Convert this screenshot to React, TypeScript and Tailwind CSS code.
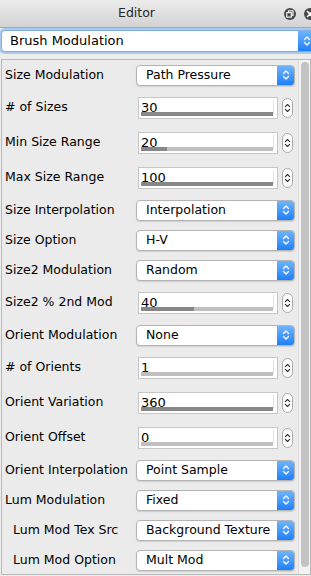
import React from "react";

const font = { fontFamily: '"DejaVu Sans", "Liberation Sans", sans-serif' };

function Chevrons({ color = "white", w = 8, h = 12 }: { color?: string; w?: number; h?: number }) {
  return (
    <svg width={w} height={h} viewBox="0 0 8 12" fill="none">
      <path d="M1.5 4.5 L4 2 L6.5 4.5" stroke={color} strokeWidth="1.3" strokeLinecap="round" strokeLinejoin="round" />
      <path d="M1.5 7.5 L4 10 L6.5 7.5" stroke={color} strokeWidth="1.3" strokeLinecap="round" strokeLinejoin="round" />
    </svg>
  );
}

function Select({ value }: { value: string }) {
  return (
    <div className="flex h-[21px] w-[159px] items-stretch overflow-hidden rounded-[4px] border border-[#b4b4b4] bg-white shadow-[0_1px_1px_rgba(0,0,0,0.12)]">
      <div className="flex flex-1 items-center pl-[9px] text-[12.5px] text-black whitespace-nowrap overflow-hidden">{value}</div>
      <div className="flex w-[17px] items-center justify-center bg-gradient-to-b from-[#6db4fb] to-[#1b7ff9]">
        <Chevrons />
      </div>
    </div>
  );
}

function Spin({ value, pct }: { value: string; pct: number }) {
  return (
    <div className="flex items-center">
      <div className="relative ml-[2px] h-[22px] w-[140px] border border-[#c6c6c6] bg-white">
        <div className="absolute left-[2px] top-[2px] text-[13px] leading-[16px] text-black">{value}</div>
        <div className="absolute right-[3px] top-[2px] h-[14px] w-px bg-[#e2e2e2]" />
        <div className="absolute bottom-[2px] left-[2px] right-[4px] h-[4px] bg-[#c0c0c0]">
          <div className="h-full bg-[#878787]" style={{ width: `${pct}%` }} />
        </div>
      </div>
      <div className="ml-[4px] flex h-[20px] w-[11px] items-center justify-center rounded-full border border-[#a8a8a8] bg-white">
        <Chevrons color="#333" w={7} h={12} />
      </div>
    </div>
  );
}

type Row =
  | { label: string; kind: "sel"; value: string; indent?: boolean }
  | { label: string; kind: "spin"; value: string; pct: number; indent?: boolean };

const rows: Row[] = [
  { label: "Size Modulation", kind: "sel", value: "Path Pressure" },
  { label: "# of Sizes", kind: "spin", value: "30", pct: 100 },
  { label: "Min Size Range", kind: "spin", value: "20", pct: 20 },
  { label: "Max Size Range", kind: "spin", value: "100", pct: 100 },
  { label: "Size Interpolation", kind: "sel", value: "Interpolation" },
  { label: "Size Option", kind: "sel", value: "H-V" },
  { label: "Size2 Modulation", kind: "sel", value: "Random" },
  { label: "Size2 % 2nd Mod", kind: "spin", value: "40", pct: 40 },
  { label: "Orient Modulation", kind: "sel", value: "None" },
  { label: "# of Orients", kind: "spin", value: "1", pct: 0 },
  { label: "Orient Variation", kind: "spin", value: "360", pct: 100 },
  { label: "Orient Offset", kind: "spin", value: "0", pct: 0 },
  { label: "Orient Interpolation", kind: "sel", value: "Point Sample" },
  { label: "Lum Modulation", kind: "sel", value: "Fixed" },
  { label: "Lum Mod Tex Src", kind: "sel", value: "Background Texture", indent: true },
  { label: "Lum Mod Option", kind: "sel", value: "Mult Mod", indent: true },
];

export default function App() {
  return (
    <div className="h-[576px] w-[311px] overflow-hidden bg-[#ececec] text-black" style={font}>
      {/* Title bar */}
      <div className="relative flex h-[28px] items-center justify-center border-b border-[#a9a9a9] bg-gradient-to-b from-[#ececec] to-[#d3d3d3]">
        <span className="mr-[38px] text-[12.5px] text-[#262626]">Editor</span>
        <div className="absolute right-[-5px] top-[8px] flex gap-[8px]">
          <div className="flex h-[12px] w-[12px] items-center justify-center rounded-full bg-[#4a4a4a]">
            <svg width="8" height="8" viewBox="0 0 8 8" fill="none">
              <rect x="2.5" y="0.8" width="4.5" height="4.5" stroke="white" strokeWidth="1.1" />
              <rect x="0.8" y="2.6" width="4.5" height="4.5" fill="#4a4a4a" stroke="white" strokeWidth="1.1" />
            </svg>
          </div>
          <div className="flex h-[12px] w-[12px] items-center justify-center rounded-full bg-[#4a4a4a]">
            <svg width="8" height="8" viewBox="0 0 8 8" fill="none">
              <path d="M1.5 1.5 L6.5 6.5 M6.5 1.5 L1.5 6.5" stroke="white" strokeWidth="1.6" strokeLinecap="round" />
            </svg>
          </div>
        </div>
      </div>

      {/* Main select */}
      <div className="mt-[2px] pl-[1px]">
        <div className="flex h-[22px] w-[316px] items-stretch overflow-hidden rounded-[4px] border border-[#7faee6] bg-white shadow-[0_0_0_2px_#a9c9ef]">
          <div className="flex flex-1 items-center pl-[8px] text-[13px]">Brush Modulation</div>
          <div className="flex w-[18px] items-center justify-center bg-gradient-to-b from-[#6db4fb] to-[#1b7ff9]">
            <Chevrons />
          </div>
        </div>
      </div>

      {/* Panel */}
      <div className="ml-[1px] mt-[7px] flex h-[516px] border border-[#b9b9b9] bg-[#ebebeb]">
        <div className="flex-1 pl-[3px]">
          {rows.map((r) => (
            <div key={r.label} className={`flex items-center ${r.kind === "sel" ? "h-[30px]" : "h-[35px]"}`}>
              <div className={`w-[131px] shrink-0 whitespace-nowrap text-[12.5px] ${r.indent ? "pl-[8px]" : ""}`}>{r.label}</div>
              {r.kind === "sel" ? <Select value={r.value} /> : <Spin value={r.value} pct={r.pct} />}
            </div>
          ))}
        </div>
        <div className="w-[12px] shrink-0 border-l border-[#dcdcdc] bg-[#f3f3f3] pt-[2px] pl-[2px]">
          <div className="h-[505px] w-[8px] rounded-full bg-[#c3c3c3]" />
        </div>
      </div>
    </div>
  );
}
